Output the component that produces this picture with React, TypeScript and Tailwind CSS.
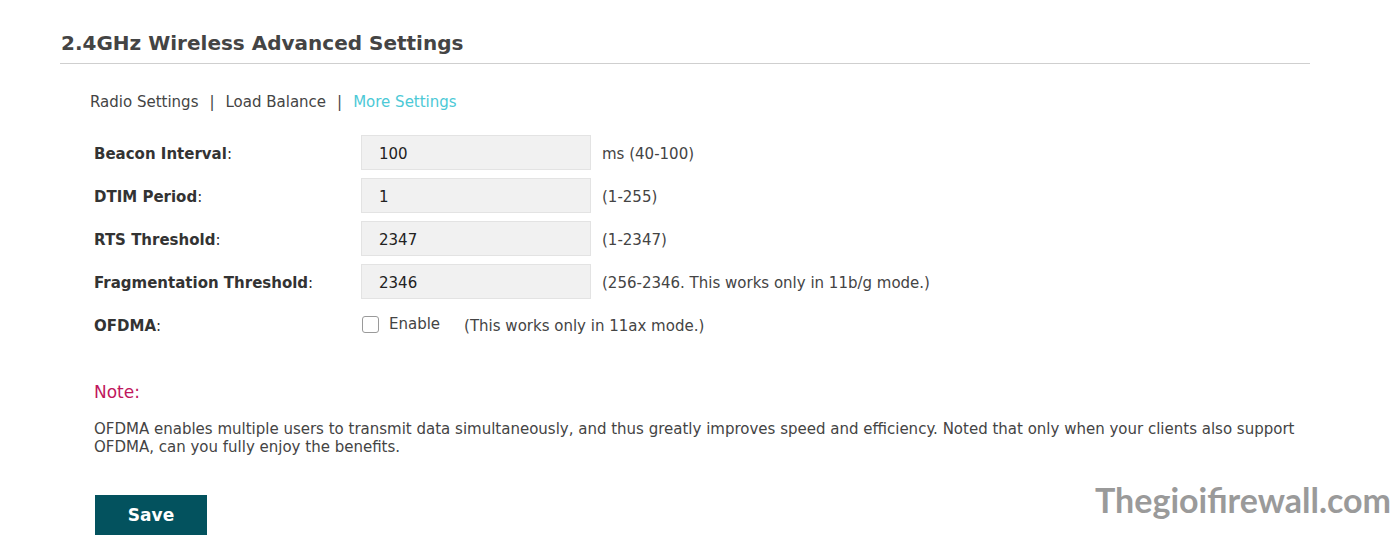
import React from "react";

const rows = [
  { label: "Beacon Interval", value: "100", hint: "ms (40-100)" },
  { label: "DTIM Period", value: "1", hint: "(1-255)" },
  { label: "RTS Threshold", value: "2347", hint: "(1-2347)" },
  { label: "Fragmentation Threshold", value: "2346", hint: "(256-2346. This works only in 11b/g mode.)" },
];

export default function App() {
  return (
    <div className="relative h-[557px] w-[1396px] overflow-hidden bg-white text-[15px] text-[#333] [font-family:'DejaVu_Sans',Verdana,sans-serif]">
      <div className="ml-[60px] w-[1250px] pt-[30px]">
        <h1 className="border-b border-[#cfcfcf] pb-[6px] pl-px text-[20px] font-bold leading-[27px] text-[#444]">
          2.4GHz Wireless Advanced Settings
        </h1>

        <div className="mt-[28px] flex items-center pl-[30px] leading-[20px] text-[#444]">
          <span>Radio Settings</span>
          <span className="px-[11px]">|</span>
          <span>Load Balance</span>
          <span className="px-[11px]">|</span>
          <span className="text-[#4cc9d6]">More Settings</span>
        </div>

        <div className="mt-[23px] flex flex-col gap-[8px] pl-[34px]">
          {rows.map((r) => (
            <div key={r.label} className="flex h-[35px] items-center">
              <div className="w-[267px] pt-[3px] font-bold text-[#333]">
                {r.label}
                <span className="font-normal">:</span>
              </div>
              <div className="flex h-[35px] w-[230px] items-center border border-[#e3e3e3] bg-[#f1f1f1] pl-[17px] pt-[3px] text-[#222]">
                {r.value}
              </div>
              <div className="ml-[11px] pt-[3px] text-[#444]">{r.hint}</div>
            </div>
          ))}
          <div className="flex h-[35px] items-center">
            <div className="w-[268px] pt-[3px] font-bold text-[#333]">
              OFDMA<span className="font-normal">:</span>
            </div>
            <span className="h-[17px] w-[17px] rounded-[3px] border border-[#9a9a9a] bg-white" />
            <span className="ml-[10px] text-[#444]">Enable</span>
            <span className="ml-[24px] pt-[3px] text-[#444]">(This works only in 11ax mode.)</span>
          </div>
        </div>

        <div className="mt-[40px] pl-[34px] text-[17px] leading-[20px] text-[#c0175d]">Note:</div>
        <p className="mt-[18px] pl-[34px] pr-[8px] leading-[18px] text-[#444]">
          OFDMA enables multiple users to transmit data simultaneously, and thus greatly improves speed and efficiency. Noted that only when your clients also support OFDMA, can you fully enjoy the benefits.
        </p>

        <button className="ml-[35px] mt-[39px] flex h-[40px] w-[112px] items-center justify-center bg-[#03525e] pt-[2px] text-[17px] font-bold text-white">
          Save
        </button>
      </div>

      <div className="absolute left-[1095px] top-[479px] text-[34px] font-bold leading-[42px] text-[#9a9a9a] [font-family:Lato,sans-serif]">
        Thegioifirewall.com
      </div>
    </div>
  );
}
